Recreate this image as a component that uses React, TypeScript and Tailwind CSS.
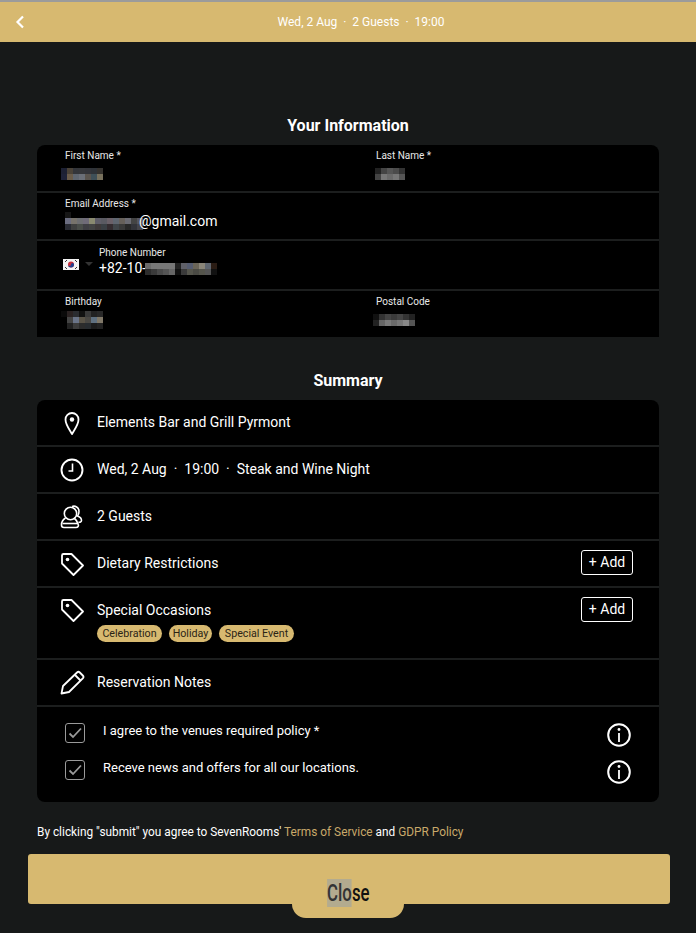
import React from 'react';

const GOLD = 'bg-[#d7b970]';

// mosaic blocks that hide personal data in the screenshot
const Blur = ({ rows, size = 6 }: { rows: string[][]; size?: number }) => (
  <span className="inline-flex flex-col align-middle">
    {rows.map((row, i) => (
      <span key={i} className="flex">
        {row.map((c, j) => (
          <span key={j} style={{ width: size, height: size, backgroundColor: c }} />
        ))}
      </span>
    ))}
  </span>
);

const firstName = [
  ['#1c2033', '#4a4238', '#33353a', '#35363a', '#33343a', '#2f3338', '#35322e'],
  ['#1e2238', '#6a5c4a', '#5f6670', '#6b6f78', '#5a544e', '#3f5058', '#77705c'],
];
const lastName = [
  ['#222', '#444', '#555', '#4b4b4b', '#333'],
  ['#444', '#777', '#6a6a6a', '#777', '#555'],
];
const emailName = [
  ['#161616', '#000', '#000', '#000', '#000', '#000', '#000', '#000', '#000', '#000', '#000', '#000', '#000'],
  ['#6b6d80', '#77736c', '#6d6e72', '#6f6b78', '#8a8a70', '#5f5d68', '#5a5a62', '#6a6068', '#5f6670', '#66605a', '#6a6a72', '#444', '#55555e'],
  ['#2a2c34', '#3f4040', '#4a4e4a', '#3f3f44', '#444', '#3f3a3a', '#3a3f44', '#342c30', '#3f4448', '#3a3a3a', '#282828', '#33343a', '#44444a'],
];
const phone = [
  ['#6a6a6a', '#777', '#777', '#777', '#777', '#222', '#5f6068', '#555c70', '#6a6558', '#8a8578', '#5f6670', '#2a1c14'],
  ['#2c2c2c', '#3a3a3a', '#4a4a4a', '#555', '#666', '#111', '#3a3a3a', '#55554c', '#4a4a44', '#55554c', '#555', '#111'],
];
const birthday = [
  ['#0a0a0a', '#2a2222', '#2a2c30', '#111', '#3a3a3a', '#222', '#282828'],
  ['#000', '#444', '#6a7488', '#5a5448', '#4a4844', '#5f7080', '#807868'],
  ['#000', '#222', '#3c3c3c', '#2c2c2c', '#282c30', '#1c1c1c', '#222'],
];
const postal = [
  ['#111', '#333', '#444', '#3a3a3a', '#444', '#333', '#222'],
  ['#222', '#666', '#7a7a7a', '#6a6a6a', '#777', '#888', '#555'],
];

const Field = ({ label, children, className = '' }: { label: string; children: React.ReactNode; className?: string }) => (
  <div className={`flex flex-col ${className}`}>
    <span className="text-[10px] leading-[12px] text-[#e8e8e8]">{label}</span>
    <div className="mt-[1px] flex h-[20px] items-center text-[14px] text-white">{children}</div>
  </div>
);

const Divider = () => <div className="h-[2px] bg-[#1c1e1e]" />;

const KoreaFlag = () => (
  <svg width="16" height="11" viewBox="0 0 16 11">
    <rect width="16" height="11" fill="#f4f4f4" />
    <circle cx="8" cy="5.500" r="3" fill="#c8303c" />
    <path d="M5 5.500a3 3 0 0 0 6 0a1.500 1.500 0 0 0-3 0a1.500 1.500 0 0 1-3 0z" fill="#1f3f8f" />
    <path d="M2 3l2-2M12 1l2 2M2 8l2 2M12 10l2-2" stroke="#333" strokeWidth="1" />
  </svg>
);

const PinIcon = () => (
  <svg width="24" height="24" viewBox="0 0 24 24" fill="none" stroke="white" strokeWidth="1.800">
    <path d="M12 23c-1.500-3-6.500-9-6.500-14.500a6.500 6.500 0 0 1 13 0C18.500 14 13.500 20 12 23z" strokeLinejoin="round" />
    <circle cx="12" cy="8.500" r="2.200" fill="white" stroke="none" />
  </svg>
);

const ClockIcon = () => (
  <svg width="24" height="24" viewBox="0 0 24 24" fill="none" stroke="white" strokeWidth="1.900">
    <circle cx="12" cy="12" r="10.500" />
    <path d="M12.500 5.500V13H8.500" strokeWidth="1.600" />
  </svg>
);

const GuestsIcon = () => (
  <svg width="24" height="24" viewBox="0 0 24 24" fill="none" stroke="white" strokeWidth="1.600">
    <circle cx="10.500" cy="8.500" r="6.200" />
    <path d="M12 1.500c3-1 7 .5 7 5c0 2-.5 3.500-1.500 4.500c1.500.5 4 2 4 4.500c0 1.500-1.500 2-3 1.500" />
    <path d="M5.500 13C3 14.500 1.500 17 1.500 20c0 1.500 1 2.500 2.500 2.500h12c2 0 2.800-1.500 2.300-3c-.6-2.500-2.300-5-4.300-6.500" />
    <path d="M2.500 18.500h15.500" />
  </svg>
);

const TagIcon = () => (
  <svg width="24" height="24" viewBox="0 0 24 24" fill="none" stroke="white" strokeWidth="1.800">
    <path d="M2 3.500a1.500 1.500 0 0 1 1.500-1.500H11.500L23 13.500L13.500 23L2 11.500z" strokeLinejoin="round" />
    <circle cx="7.500" cy="7.500" r="1.800" fill="white" stroke="none" />
  </svg>
);

const PencilIcon = () => (
  <svg width="25" height="25" viewBox="0 0 25 25" fill="none" stroke="white" strokeWidth="1.800">
    <path d="M1.500 23.500L3 16L17 2.500a2 2 0 0 1 2.800 0l3 3a2 2 0 0 1 0 2.800L9 22z" strokeLinejoin="round" />
    <path d="M15 5l5.500 5.500" />
  </svg>
);

const InfoIcon = () => (
  <svg width="24" height="24" viewBox="0 0 24 24" fill="none" stroke="white" strokeWidth="2">
    <circle cx="12" cy="12" r="10.800" />
    <path d="M12 10v9" strokeWidth="1.800" />
    <circle cx="12" cy="6.500" r="1.400" fill="white" stroke="none" />
  </svg>
);

const CheckBox = () => (
  <span className="flex h-[20px] w-[20px] shrink-0 items-center justify-center rounded-[3px] border-[1.500px] border-[#9a9a9a]">
    <svg width="14" height="12" viewBox="0 0 14 12" fill="none" stroke="#9a9a9a" strokeWidth="1.800">
      <path d="M1.500 6.500L5 10L13 1.500" />
    </svg>
  </span>
);

const AddButton = ({ className = '' }: { className?: string }) => (
  <button className={`h-[25px] w-[52px] rounded-[3px] border border-white text-[14px] leading-[21px] text-white ${className}`}>+ Add</button>
);

const SummaryRow = ({ icon, text, right }: { icon: React.ReactNode; text: React.ReactNode; right?: React.ReactNode }) => (
  <div className="flex h-[45px] items-center pl-[23px] pr-[26px]">
    <span className="flex w-[37px] shrink-0">{icon}</span>
    <span className="flex-1 text-[14px] text-white">{text}</span>
    {right}
  </div>
);

const Pill = ({ children, className = '' }: { children: React.ReactNode; className?: string }) => (
  <span className={`rounded-full ${GOLD} text-center text-[10.700px] leading-[17px] text-[#2b2415] ${className}`}>{children}</span>
);

export default function App() {
  return (
    <div className="relative h-[933px] w-[696px] overflow-hidden bg-[#171919] font-['Roboto',sans-serif]">
      <header className={`relative flex h-[42px] items-center justify-center border-t-2 border-[#9b9b9b] pl-[26px] ${GOLD}`}>
        <svg className="absolute left-[15px] top-[13px]" width="10" height="14" viewBox="0 0 10 14" fill="none" stroke="white" strokeWidth="2.200">
          <path d="M8 1.500L2.500 7L8 12.500" />
        </svg>
        <span className="whitespace-pre text-[12px] text-white">Wed, 2 Aug  ·  2 Guests  ·  19:00</span>
      </header>

      <main className="px-[37px] pt-[74px]">
        <h2 className="text-center text-[16px] font-bold leading-[20px] text-white">Your Information</h2>
        <section className="mt-[9px] overflow-hidden rounded-t-[8px] bg-black">
          <div className="flex h-[46px] pl-[28px] pt-[5px]">
            <Field label="First Name *" className="w-[311px]">
              <span className="-ml-[4px]"><Blur rows={firstName} /></span>
            </Field>
            <Field label="Last Name *">
              <span className="-ml-[1px]"><Blur rows={lastName} /></span>
            </Field>
          </div>
          <Divider />
          <div className="h-[46px] pl-[28px] pt-[5px]">
            <Field label="Email Address *">
              <Blur rows={emailName} />
              <span className="-ml-[4px]">@gmail.com</span>
            </Field>
          </div>
          <Divider />
          <div className="flex h-[48px] pl-[26px] pt-[6px]">
            <div className="mt-[11px] flex h-[12px] w-[36px] items-center gap-[6px]">
              <KoreaFlag />
              <span className="h-0 w-0 border-x-[4px] border-t-[4px] border-x-transparent border-t-[#333]" />
            </div>
            <Field label="Phone Number" className="[&>div]:mt-[-1px]">
              +82-10-
              <span className="-ml-[1px]"><Blur rows={phone} /></span>
            </Field>
          </div>
          <Divider />
          <div className="flex h-[46px] pl-[28px] pt-[5px]">
            <Field label="Birthday" className="w-[311px]">
              <span className="-ml-[4px]"><Blur rows={birthday} /></span>
            </Field>
            <Field label="Postal Code">
              <span className="-ml-[3px]"><Blur rows={postal} /></span>
            </Field>
          </div>
        </section>

        <h2 className="mt-[34px] text-center text-[16px] font-bold leading-[20px] text-white">Summary</h2>
        <section className="mt-[9px] overflow-hidden rounded-[8px] bg-black">
          <SummaryRow icon={<PinIcon />} text="Elements Bar and Grill Pyrmont" />
          <Divider />
          <SummaryRow icon={<ClockIcon />} text={<span className="whitespace-pre">Wed, 2 Aug  ·  19:00  ·  Steak and Wine Night</span>} />
          <Divider />
          <SummaryRow icon={<GuestsIcon />} text="2 Guests" />
          <Divider />
          <SummaryRow icon={<TagIcon />} text="Dietary Restrictions" right={<AddButton className="-mt-[2px]" />} />
          <Divider />
          <div className="flex h-[70px] pl-[23px] pr-[26px] pt-[10px]">
            <span className="flex w-[37px] shrink-0"><TagIcon /></span>
            <div className="flex-1">
              <div className="text-[14px] leading-[24px] text-white">Special Occasions</div>
              <div className="mt-[3px] flex gap-[7px]">
                <Pill className="w-[65px]">Celebration</Pill>
                <Pill className="w-[43px]">Holiday</Pill>
                <Pill className="w-[75px]">Special Event</Pill>
              </div>
            </div>
            <AddButton className="-mt-[1px]" />
          </div>
          <Divider />
          <SummaryRow icon={<PencilIcon />} text="Reservation Notes" />
          <Divider />
          <div className="flex h-[95px] flex-col gap-[17px] pl-[28px] pr-[28px] pt-[16px]">
            <div className="flex h-[20px] items-start">
              <CheckBox />
              <span className="ml-[18px] flex-1 text-[13px] leading-[15px] text-white">I agree to the venues required policy *</span>
              <InfoIcon />
            </div>
            <div className="flex h-[20px] items-start">
              <CheckBox />
              <span className="ml-[18px] flex-1 text-[13px] leading-[15px] text-white">Receve news and offers for all our locations.</span>
              <InfoIcon />
            </div>
          </div>
        </section>

        <p className="mt-[23px] text-[11.850px] leading-[15px] text-white">
          By clicking "submit" you agree to SevenRooms' <span className="text-[#c9a96a]">Terms of Service</span> and <span className="text-[#c9a96a]">GDPR Policy</span>
        </p>
      </main>

      <div className={`absolute left-[28px] top-[854px] h-[50px] w-[642px] rounded-[3px] ${GOLD}`} />
      {/* close tab sits over the submit bar */}
      <div className={`absolute left-[292px] top-[879px] flex h-[39px] w-[112px] items-start justify-center rounded-b-[14px] ${GOLD}`}>
        <span className="inline-block scale-x-[0.7] text-[24px] font-medium leading-[28px] text-[#111]"><span className="bg-[#b3ab8f] text-[#333]">Clo</span>se</span>
      </div>
    </div>
  );
}
